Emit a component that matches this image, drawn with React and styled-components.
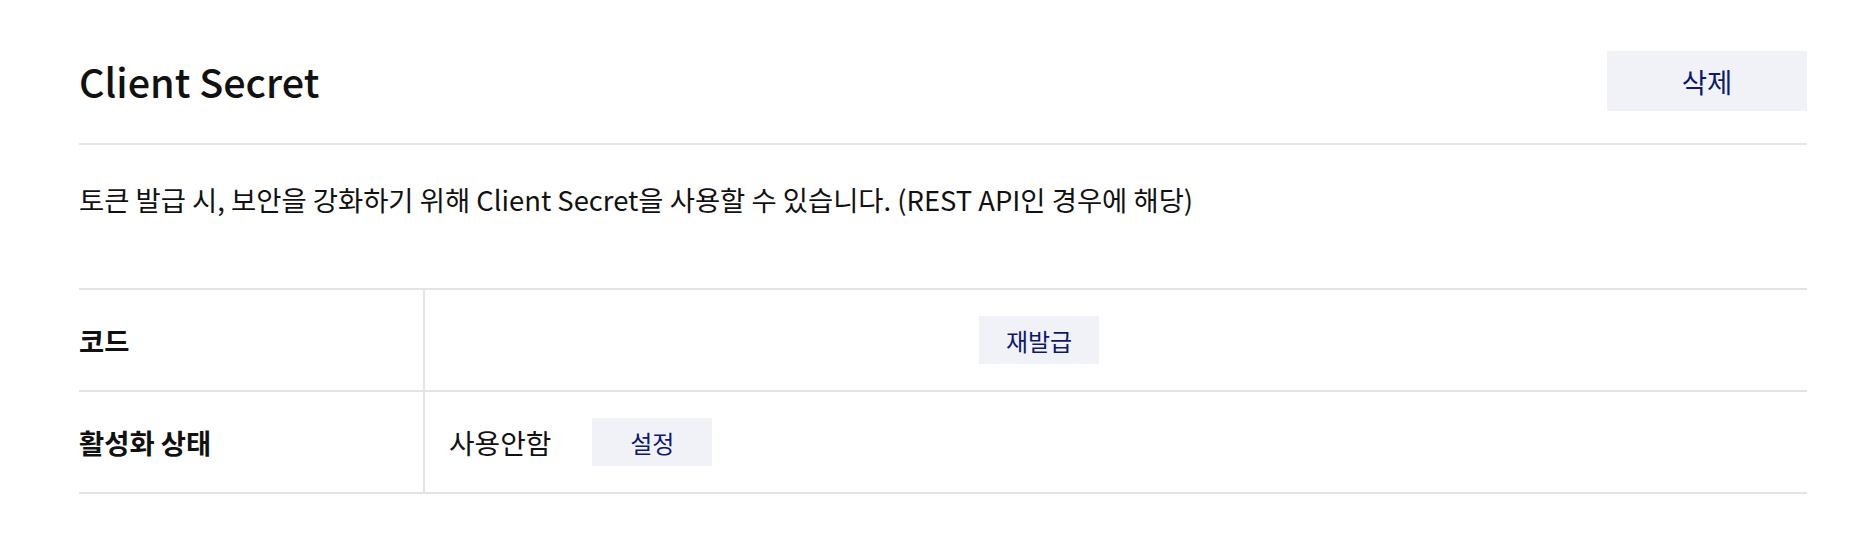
import React from "react";
import styled, { createGlobalStyle } from "styled-components";

const App = () => {
  return (
    <>
      <GlobalStyle />
      <Section>
        <Header>
          <Title>Client Secret</Title>
          <ActionButton size="lg">삭제</ActionButton>
        </Header>

        <Description>
          토큰 발급 시, 보안을 강화하기 위해 Client Secret을 사용할 수 있습니다. (REST API인 경우에 해당)
        </Description>

        <Table>
          <Row>
            <Label>코드</Label>
            <Value>
              <CodeText />
              <ActionButton>재발급</ActionButton>
            </Value>
          </Row>
          <Row>
            <Label>활성화 상태</Label>
            <Value>
              <span>사용안함</span>
              <ActionButton>설정</ActionButton>
            </Value>
          </Row>
        </Table>
      </Section>
    </>
  );
};

export default App;

const GlobalStyle = createGlobalStyle`
  body {
    margin: 0;
    background: #fff;
    font-family: "Noto Sans CJK KR", "Noto Sans", sans-serif;
    color: #111;
  }
`;

const Section = styled.section`
  padding: 51px 57px 0 79px;
`;

const Header = styled.div`
  display: flex;
  justify-content: space-between;
  align-items: center;
  padding-bottom: 32px;
  border-bottom: 2px solid #e4e4e4;
`;

const Title = styled.h2`
  margin: 0;
  font-size: 39.5px;
  font-weight: 500;
  line-height: 60px;
  color: #111;
`;

const ActionButton = styled.button`
  flex-shrink: 0;
  width: ${(p) => (p.size === "lg" ? "200px" : "120px")};
  height: ${(p) => (p.size === "lg" ? "60px" : "48px")};
  background: #f1f2f8;
  color: #0c1a6c;
  border: none;
  font-family: inherit;
  font-size: ${(p) => (p.size === "lg" ? "27.5px" : "24px")};
  padding: 0;
  cursor: pointer;
`;

const Description = styled.p`
  margin: 34px 0 69px;
  font-size: 27.4px;
  line-height: 40px;
  color: #111;
`;

const Table = styled.div`
  border-top: 2px solid #e4e4e4;
`;

const Row = styled.div`
  display: grid;
  grid-template-columns: 346px 1fr;
  height: 100px;
  border-bottom: 2px solid #e4e4e4;
`;

const Label = styled.div`
  display: flex;
  align-items: center;
  border-right: 2px solid #e4e4e4;
  font-size: 27.4px;
  font-weight: 700;
`;

const Value = styled.div`
  display: flex;
  align-items: center;
  gap: 41px;
  padding-left: 24px;
  font-size: 27.8px;
`;

const CodeText = styled.span`
  width: 489px;
`;
